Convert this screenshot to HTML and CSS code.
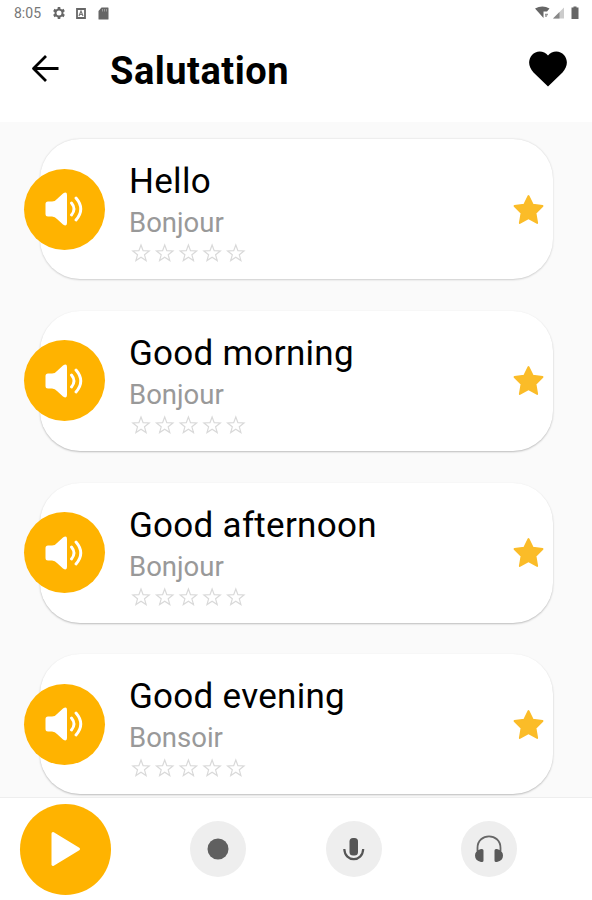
FILE: index.html
```
<!DOCTYPE html>
<html lang="en">
<head>
  <meta charset="UTF-8"/>
  <meta name="viewport" content="width=device-width, initial-scale=1.0"/>
  <title>Salutation</title>
  <link rel="stylesheet" href="styles.css">
</head>
<body>

  <!-- Shared icons -->
  <svg class="icon-defs" width="0" height="0">
    <symbol id="speaker" viewBox="0 0 38 34">
      <path d="M3 9.500H7Q10 9.500 12 7L18 1.500Q22 -1 22 3V31Q22 35 18 32.500L12 27Q10 24.500 7 24.500H3Q.5 24.500 .5 22V12Q.5 9.500 3 9.500Z" fill="#fff"/>
      <path d="M26.500 11Q31.500 17 26.500 23M31 6Q40.500 17 31 28" fill="none" stroke="#fff" stroke-width="2.900" stroke-linecap="round"/>
    </symbol>
    <symbol id="star" viewBox="0 0 32 31">
      <path d="M16.500 2L20.800 10.600L30.500 12L23.500 19L25.200 29L16.500 24.300L7.800 29L9.500 19L2.500 12L12.200 10.600Z" fill="#fbbc28" stroke="#fbbc28" stroke-width="1.800" stroke-linejoin="round"/>
    </symbol>
    <symbol id="rating" viewBox="0 0 119 20">
      <g fill="none" stroke="#d9d9d9" stroke-width="1.200">
        <path id="outline" d="M12 2L14.100 7.700L20.200 8L15.500 11.800L17.100 17.600L12 14.300L6.900 17.600L8.500 11.800L3.800 8L9.900 7.700Z"/>
        <use href="#outline" x="23.700"/>
        <use href="#outline" x="47.400"/>
        <use href="#outline" x="71.100"/>
        <use href="#outline" x="94.800"/>
      </g>
    </symbol>
  </svg>

  <div class="status-bar">
    <span class="time">8:05</span>
    <svg class="gear" width="14" height="14" viewBox="0 0 14 14">
      <path d="M7 1V13M1.800 4L12.200 10M12.200 4L1.800 10" stroke="#666" stroke-width="2.600"/>
      <circle cx="7" cy="7" r="3.500" fill="#fff" stroke="#666" stroke-width="2"/>
    </svg>
    <svg class="keyboard" width="10" height="11" viewBox="0 0 10 11">
      <path d="M1 1H9V10H1Z" fill="none" stroke="#666" stroke-width="1.800"/>
      <path d="M3 8L5 3L7 8M3.500 6.500H6.500" fill="none" stroke="#777" stroke-width="1.200"/>
    </svg>
    <svg class="sd-card" width="11" height="13" viewBox="0 0 11 13">
      <path d="M3.500 .5H10Q10.500 .5 10.500 1V12Q10.500 12.500 10 12.500H1Q.5 12.500 .5 12V4Z" fill="#666"/>
      <path d="M4.500 2V4.500M6.500 2V4.500M8.500 2V4.500" stroke="#aaa" stroke-width=".8"/>
    </svg>
    <svg class="signals" width="46" height="14" viewBox="0 0 46 14">
      <path d="M1 2.500Q8.500 -1.500 15.500 2.500L13 5.500H9.500V12Z" fill="#666"/>
      <path d="M11 8.500H14M12 8V11" stroke="#999" stroke-width="1.500"/>
      <path d="M19 12.500L30 1.500V12.500Z" fill="#ccc"/>
      <path d="M19 12.500L25.500 6V12.500Z" fill="#888"/>
      <path d="M39.500 1.500V.5H42.500V1.500H44.500V13H37.500V1.500Z" fill="#666"/>
    </svg>
  </div>

  <header>
    <svg class="back" width="30" height="30" viewBox="0 0 30 30">
      <path d="M28.500 14.500H3.500M16 2L3.500 14.500L16 27" fill="none" stroke="#000" stroke-width="2.800" stroke-linejoin="round"/>
    </svg>
    <h1>Salutation</h1>
    <svg class="heart" width="38" height="36" viewBox="0 0 38 36">
      <path d="M19 4.500C23 -.8 31 -1 35 4C39.500 9.500 38.500 16 33.500 21.500L19 35.500L4.500 21.500C-.5 16 -1.500 9.500 3 4C7 -1 15 -.8 19 4.500Z"/>
    </svg>
  </header>

  <main>
    <div class="card">
      <div class="speaker"><svg width="38" height="34"><use href="#speaker"/></svg></div>
      <div class="phrase">
        <h2>Hello</h2>
        <p>Bonjour</p>
        <svg width="119" height="20"><use href="#rating"/></svg>
      </div>
      <svg class="favorite" width="32" height="31"><use href="#star"/></svg>
    </div>

    <div class="card">
      <div class="speaker"><svg width="38" height="34"><use href="#speaker"/></svg></div>
      <div class="phrase">
        <h2>Good morning</h2>
        <p>Bonjour</p>
        <svg width="119" height="20"><use href="#rating"/></svg>
      </div>
      <svg class="favorite" width="32" height="31"><use href="#star"/></svg>
    </div>

    <div class="card">
      <div class="speaker"><svg width="38" height="34"><use href="#speaker"/></svg></div>
      <div class="phrase">
        <h2>Good afternoon</h2>
        <p>Bonjour</p>
        <svg width="119" height="20"><use href="#rating"/></svg>
      </div>
      <svg class="favorite" width="32" height="31"><use href="#star"/></svg>
    </div>

    <div class="card">
      <div class="speaker"><svg width="38" height="34"><use href="#speaker"/></svg></div>
      <div class="phrase">
        <h2>Good evening</h2>
        <p>Bonsoir</p>
        <svg width="119" height="20"><use href="#rating"/></svg>
      </div>
      <svg class="favorite" width="32" height="31"><use href="#star"/></svg>
    </div>
  </main>

  <!-- Player controls -->
  <footer>
    <div class="play">
      <svg width="30" height="36" viewBox="0 0 30 36">
        <path d="M2 2.500L27.500 18L2 33.500Z" fill="#fff" stroke="#fff" stroke-width="3" stroke-linejoin="round"/>
      </svg>
    </div>
    <div class="control">
      <svg width="22" height="22" viewBox="0 0 22 22"><circle cx="11" cy="11" r="10.500" fill="#606060"/></svg>
    </div>
    <div class="control">
      <svg width="22" height="24" viewBox="0 0 22 24">
        <rect x="6.500" y="1" width="8.500" height="17.500" rx="3.500" fill="#555"/>
        <path d="M1.300 12C1.800 25.500 19.700 25.500 20.200 12" fill="none" stroke="#555" stroke-width="2.200"/>
      </svg>
    </div>
    <div class="control">
      <svg width="28" height="28" viewBox="0 0 28 28">
        <path d="M2.500 16V13C2.500 -2.500 25.500 -2.500 25.500 13V16" fill="none" stroke="#666" stroke-width="1.800"/>
        <path d="M6 14H7Q8.500 14 8.500 15.500V25.500Q8.500 27 7 27H6Q0 25.500 0 20.500Q0 15.500 6 14ZM22 14H21Q19.500 14 19.500 15.500V25.500Q19.500 27 21 27H22Q28 25.500 28 20.500Q28 15.500 22 14Z" fill="#5a5a5a"/>
      </svg>
    </div>
  </footer>

</body>
</html>
```
FILE: styles.css
```
* {
  box-sizing: border-box;
}

body {
  font-family: Roboto, sans-serif;
  margin: 0;
  height: 900px;
  background: #fff;
  display: flex;
  flex-direction: column;
  overflow: hidden;
}

svg {
  display: block;
  flex-shrink: 0;
}

.icon-defs {
  position: absolute;
}

/* Status bar */
.status-bar {
  height: 26px;
  padding: 0 12px 0 14px;
  display: flex;
  align-items: center;
}

.time {
  width: 38px;
  font-size: 14px;
  color: #777;
}

.keyboard {
  margin: 0 12px 0 10px;
}

.signals {
  margin-left: auto;
}

/* Title bar */
header {
  height: 96px;
  padding: 0 25px 11px 30px;
  display: flex;
  align-items: center;
}

h1 {
  margin: 4px 0 0 50px;
  font-size: 38px;
  font-weight: 700;
  line-height: 44px;
  letter-spacing: 0.5px;
}

.heart {
  margin-left: auto;
}

/* Phrase list */
main {
  height: 675px;
  padding: 17px 39px 0 40px;
  background: #fafafa;
  display: flex;
  flex-direction: column;
  gap: 31.800px;
  overflow: hidden;
}

.card {
  flex: none;
  height: 140px;
  padding-right: 9px;
  border-radius: 40px;
  background: #fff;
  box-shadow: 0 1px 2px rgba(0,0,0,0.25);
  display: flex;
  align-items: center;
}

.card:first-child {
  box-shadow: 0 0.5px 2px rgba(0,0,0,0.18);
}

.speaker {
  width: 81px;
  height: 81px;
  margin-left: -16px;
  padding-right: 1px;
  border-radius: 50%;
  background: #ffb300;
  display: flex;
  align-items: center;
  justify-content: center;
}

.phrase {
  flex: 1;
  align-self: flex-start;
  padding: 22px 0 0 24px;
}

.phrase h2 {
  margin: 0;
  font-size: 35px;
  font-weight: 400;
  line-height: 42px;
  letter-spacing: 0.28px;
  color: #000;
}

.phrase p {
  margin: 1px 0;
  font-size: 27.5px;
  line-height: 38px;
  color: #999;
}

/* Footer */
footer {
  height: 103px;
  padding: 0 75px 0 20px;
  border-top: 1px solid #eee;
  display: flex;
  align-items: center;
  justify-content: space-between;
}

.play,
.control {
  border-radius: 50%;
  display: flex;
  align-items: center;
  justify-content: center;
}

.play {
  width: 91px;
  height: 91px;
  background: #ffb300;
}

.control {
  width: 56px;
  height: 56px;
  background: #eee;
}
```
